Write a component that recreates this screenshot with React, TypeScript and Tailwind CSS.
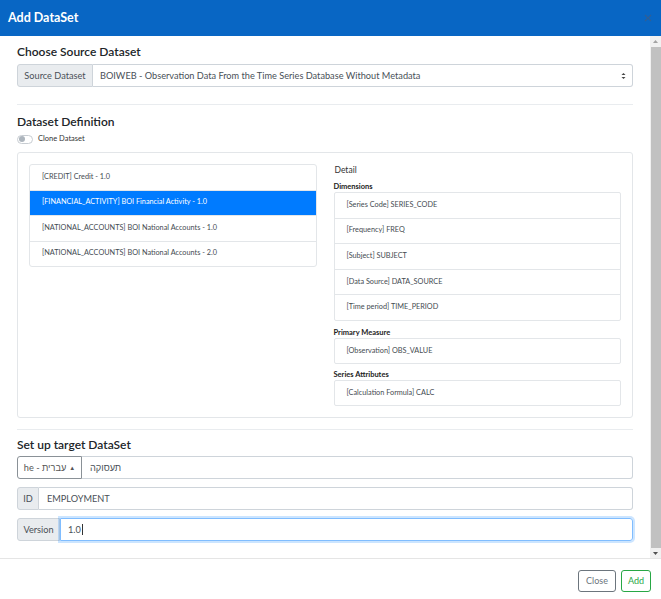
import React from 'react';

const datasets = [
  '[CREDIT] Credit - 1.0',
  '[FINANCIAL_ACTIVITY] BOI Financial Activity - 1.0',
  '[NATIONAL_ACCOUNTS] BOI National Accounts - 1.0',
  '[NATIONAL_ACCOUNTS] BOI National Accounts - 2.0',
];

const dimensions = [
  '[Series Code] SERIES_CODE',
  '[Frequency] FREQ',
  '[Subject] SUBJECT',
  '[Data Source] DATA_SOURCE',
  '[Time period] TIME_PERIOD',
];

const SectionTitle = ({ children }: { children: React.ReactNode }) => (
  <h2 className="text-[12px] leading-[16px] font-semibold text-[#212529]">{children}</h2>
);

const DetailList = ({ items }: { items: string[] }) => (
  <div className="border border-[#e3e6e9] rounded-[2px]">
    {items.map((it, i) => (
      <div
        key={it}
        className={`flex items-center pl-[12px] text-[7.3px] text-[#454b51] ${
          i < items.length - 1 ? 'h-[25.6px] border-b border-[#e3e6e9]' : items.length > 1 ? 'h-[24.6px]' : 'h-[24px]'
        }`}
      >
        {it}
      </div>
    ))}
  </div>
);

export default function App() {
  const selected = 1;
  return (
    <div className="w-[661px] h-[599px] flex flex-col bg-white font-['Lato',sans-serif] text-[#212529] overflow-hidden">
      {/* header */}
      <div className="h-[36px] shrink-0 bg-[#0866c4] flex items-center justify-between pl-[8px] pr-[9px]">
        <h1 className="text-white font-bold text-[12.5px]">Add DataSet</h1>
        <svg width="8" height="8" viewBox="0 0 8 8">
          <path d="M1 1L7 7M7 1L1 7" stroke="#2f5f96" strokeWidth="1.2" />
        </svg>
      </div>

      {/* body */}
      <div className="flex-1 flex min-h-0">
        <div className="flex-1 px-[17px] pt-[8px] overflow-hidden">
          <SectionTitle>Choose Source Dataset</SectionTitle>
          <div className="mt-[4px] h-[23px] flex text-[9.2px] text-[#495057]">
            <div className="w-[76px] shrink-0 bg-[#e9ecef] border border-[#ced4da] rounded-l-[3px] flex items-center justify-center">
              Source Dataset
            </div>
            <div className="flex-1 border border-l-0 border-[#ced4da] rounded-r-[3px] flex items-center justify-between pl-[7px] pr-[6px]">
              <span>BOIWEB - Observation Data From the Time Series Database Without Metadata</span>
              <svg width="5" height="8" viewBox="0 0 5 8">
                <path d="M0.5 3L2.5 1L4.5 3ZM0.5 5L2.5 7L4.5 5Z" fill="#444" />
              </svg>
            </div>
          </div>

          <div className="mt-[17px] border-t border-[#e9ecef]" />

          <div className="mt-[9px]">
            <SectionTitle>Dataset Definition</SectionTitle>
          </div>
          <div className="mt-[3px] h-[12px] flex items-center">
            <div className="w-[16px] h-[9px] rounded-full border border-[#c8cdd2] bg-white flex items-center pl-[1px]">
              <div className="w-[6px] h-[6px] rounded-full bg-[#adb5bd]" />
            </div>
            <span className="ml-[5px] text-[7.5px] text-[#333]">Clone Dataset</span>
          </div>

          {/* card */}
          <div className="mt-[7px] border border-[#e3e6e9] rounded-[3px] p-[11px] grid grid-cols-2 gap-[17px]">
            <div className="self-start border border-[#e3e6e9] rounded-[3px]">
              {datasets.map((d, i) => (
                <div
                  key={d}
                  className={`flex items-center pl-[12px] text-[7.3px] ${
                    i === selected ? 'bg-[#007bff] text-white' : 'text-[#454b51]'
                  } ${i < datasets.length - 1 ? 'h-[25.6px] border-b border-[#e3e6e9]' : 'h-[24.2px]'}`}
                >
                  {d}
                </div>
              ))}
            </div>
            <div>
              <div className="text-[8.5px] leading-[12px] pl-[1px] text-[#333]">Detail</div>
              <div className="mt-[6px] text-[7.5px] leading-[10px] font-bold text-[#222]">Dimensions</div>
              <DetailList items={dimensions} />
              <div className="mt-[6px] text-[7.5px] leading-[11px] font-bold text-[#222]">Primary Measure</div>
              <DetailList items={['[Observation] OBS_VALUE']} />
              <div className="mt-[5px] text-[7.5px] leading-[11px] font-bold text-[#222]">Series Attributes</div>
              <DetailList items={['[Calculation Formula] CALC']} />
            </div>
          </div>

          <div className="mt-[11px] border-t border-[#e9ecef]" />

          <div className="mt-[7px]">
            <SectionTitle>Set up target DataSet</SectionTitle>
          </div>

          <div className="mt-[3px] h-[23px] flex text-[9.2px] text-[#495057]">
            <button className="w-[65px] shrink-0 border border-[#8a9197] rounded-l-[3px] flex items-center justify-center gap-[3px] text-[#555] bg-white">
              <span>he - עברית</span>
              <span className="text-[6px]">▲</span>
            </button>
            <div dir="rtl" className="flex-1 border border-l-0 border-[#ced4da] rounded-r-[3px] flex items-center justify-end pl-[8px]">
              <span>תעסוקה</span>
            </div>
          </div>

          <div className="mt-[8px] h-[23px] flex text-[9.2px] text-[#495057]">
            <div className="w-[22px] shrink-0 bg-[#e9ecef] border border-[#ced4da] rounded-l-[3px] flex items-center justify-center">
              ID
            </div>
            <div className="flex-1 border border-l-0 border-[#ced4da] rounded-r-[3px] flex items-center pl-[8px]">
              EMPLOYMENT
            </div>
          </div>

          <div className="mt-[8px] h-[23px] flex text-[9.2px] text-[#495057]">
            <div className="w-[43px] shrink-0 bg-[#e9ecef] border border-[#ced4da] rounded-l-[3px] flex items-center justify-center">
              Version
            </div>
            <div className="flex-1 border border-[#80bdff] rounded-r-[3px] shadow-[0_0_0_2px_rgba(0,123,255,0.2)] flex items-center pl-[7px]">
              <span>1.0</span>
              <span className="ml-[1px] w-px h-[11px] bg-[#333]" />
            </div>
          </div>
        </div>

        {/* scrollbar */}
        <div className="w-[11px] shrink-0 bg-[#f1f1f1] flex flex-col items-center">
          <div className="h-[11px] flex items-center justify-center">
            <svg width="5" height="3" viewBox="0 0 5 3"><path d="M0 3L2.5 0L5 3Z" fill="#a3a3a3" /></svg>
          </div>
          <div className="flex-1 w-[10px] bg-[#c1c1c1]" />
          <div className="h-[10px] flex items-center justify-center">
            <svg width="5" height="3" viewBox="0 0 5 3"><path d="M0 0L2.5 3L5 0Z" fill="#505050" /></svg>
          </div>
        </div>
      </div>

      {/* footer */}
      <div className="h-[41px] shrink-0 border-t border-[#e5e5e5] flex items-center justify-end gap-[5px] pr-[10px] pt-[3px]">
        <button className="h-[22px] w-[38px] border border-[#6c757d] rounded-[3px] text-[9px] text-[#6c757d]">Close</button>
        <button className="h-[22px] w-[30px] border border-[#28a745] rounded-[3px] text-[9px] text-[#28a745]">Add</button>
      </div>
    </div>
  );
}
